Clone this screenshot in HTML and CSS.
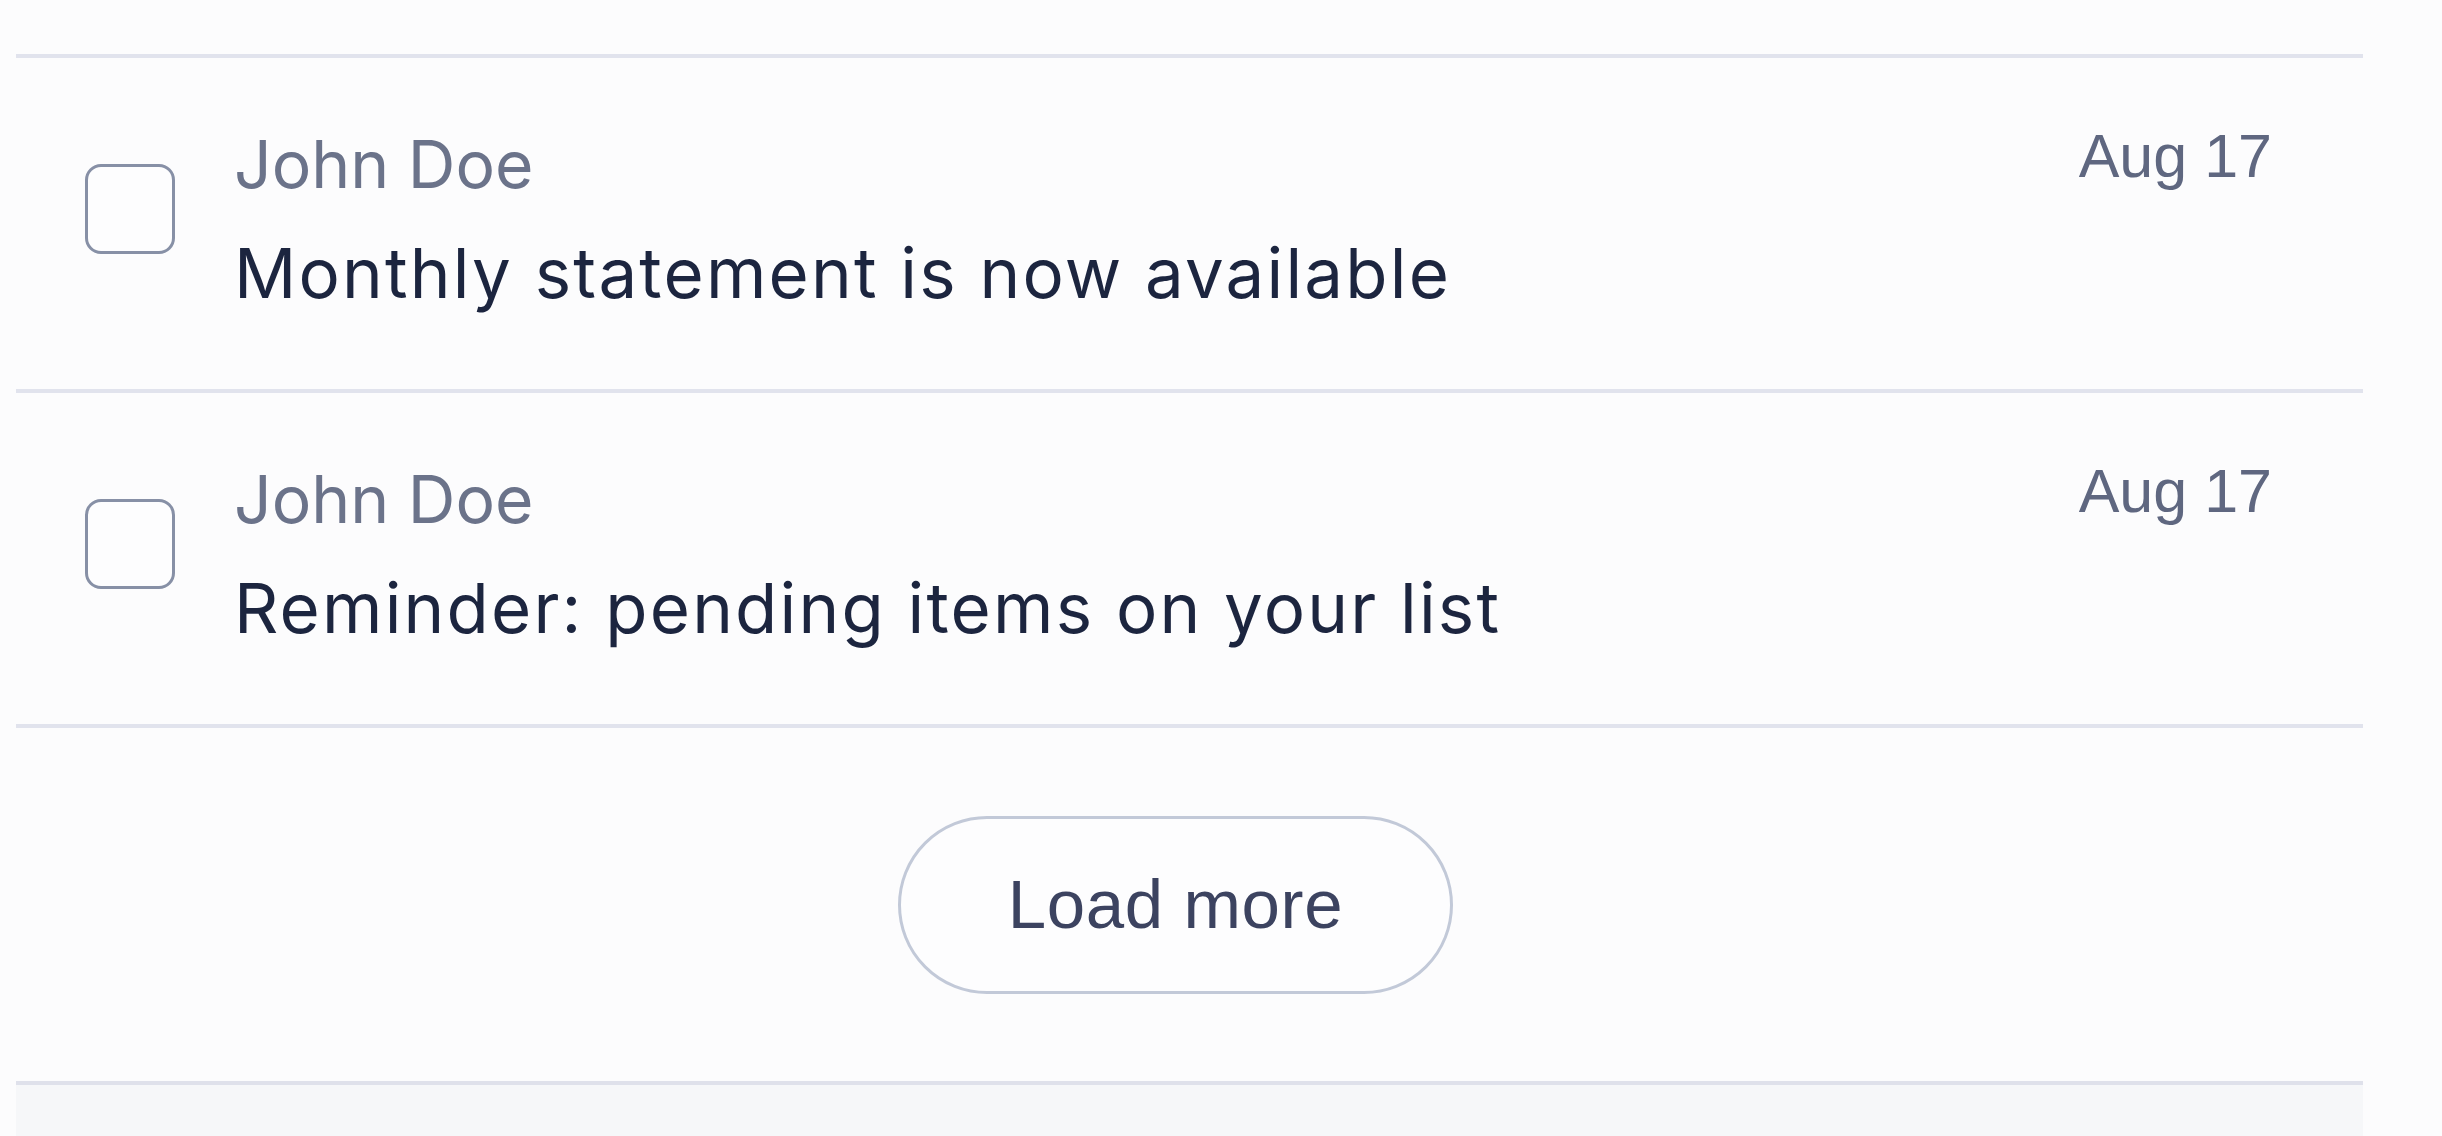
FILE: index.html
```html
<!DOCTYPE html>
<html lang="en">
<head>
<meta charset="utf-8">
<title>Messages</title>
<link rel="stylesheet" href="styles.css">
</head>
<body>
<div class="page">
  <div class="list">
    <div class="item">
      <span class="check" role="checkbox" aria-checked="false"></span>
      <div class="body">
        <div class="sender">John Doe</div>
        <div class="subject">Monthly statement is now available</div>
      </div>
      <div class="date">Aug 17</div>
    </div>
    <div class="item">
      <span class="check" role="checkbox" aria-checked="false"></span>
      <div class="body">
        <div class="sender">John Doe</div>
        <div class="subject">Reminder: pending items on your list</div>
      </div>
      <div class="date">Aug 17</div>
    </div>
    <div class="more">
      <button class="more-btn" type="button">Load more</button>
    </div>
    <div class="footer"></div>
  </div>
</div>
</body>
</html>
```

FILE: styles.css
```css
html, body {
  margin: 0;
  padding: 0;
  height: 100%;
}

body {
  background: #fcfcfd;
  font-family: Inter, "Noto Sans", sans-serif;
  overflow: hidden;
}

.page {
  padding: 54px 0 0 16px;
  height: 100%;
  box-sizing: border-box;
}

.list {
  width: 2347px;
  height: 100%;
  display: flex;
  flex-direction: column;
}

.item {
  border-top: 4px solid #e1e3ed;
  height: 331px;
  display: flex;
  align-items: flex-start;
  padding: 0 91px 0 69px;
}

.check {
  flex: none;
  width: 84px;
  height: 84px;
  margin-top: 106px;
  border: 3px solid #8790a6;
  border-radius: 16px;
  background: #fdfdfe;
}

.body {
  flex: 1;
  margin-left: 59px;
  margin-top: 66px;
}

.sender {
  font-size: 66px;
  line-height: 80px;
  color: #6b738a;
}

.subject {
  margin-top: 27px;
  font-size: 69px;
  line-height: 84px;
  letter-spacing: 2.2px;
  color: #1c253f;
}

.date {
  flex: none;
  margin-top: 62px;
  font-family: "Liberation Sans", Arial, sans-serif;
  font-size: 61px;
  line-height: 72px;
  color: #5f6780;
}

.more {
  border-top: 4px solid #e1e3ed;
  height: 353px;
  display: flex;
  align-items: center;
  justify-content: center;
  padding-right: 28px;
}

.more-btn {
  width: 555px;
  height: 178px;
  border: 3px solid #c2c9d8;
  border-radius: 89px;
  background: #fdfdfe;
  font-family: "Liberation Sans", Arial, sans-serif;
  font-size: 69px;
  letter-spacing: 0.6px;
  color: #3c4360;
  padding: 0;
}

.footer {
  flex: 1;
  border-top: 4px solid #dfe1eb;
  background: #f6f7f9;
}
```
